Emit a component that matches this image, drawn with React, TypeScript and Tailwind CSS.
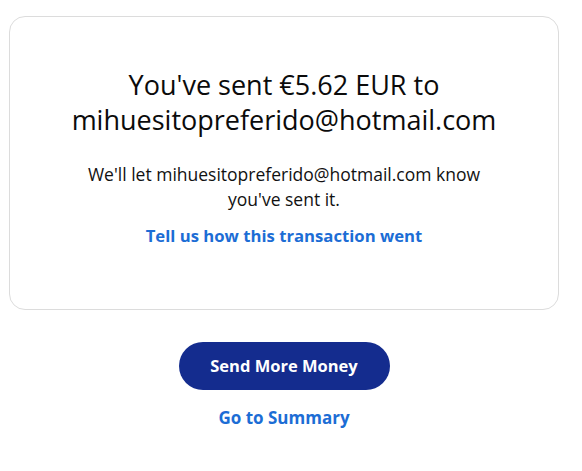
export default function App() {
  return (
    <div className="min-h-screen bg-white px-[9px] pt-4 font-['Open_Sans',sans-serif] text-[#001435]">
      <div className="w-[550px]">
        <div className="flex h-[294px] flex-col items-center rounded-2xl border border-[#dcdcdc] px-6 pt-[50px] text-center">
          <h1 className="text-[27px] leading-[35px] text-[#0b0b0b]">
            You've sent €5.62 EUR to
            <br />
            mihuesitopreferido@hotmail.com
          </h1>
          <p className="mt-[25px] text-[17.5px] leading-[25px] text-[#111]">
            We'll let mihuesitopreferido@hotmail.com know
            <br />
            you've sent it.
          </p>
          <a href="#" className="mt-[12px] text-[16.7px] font-bold leading-[24px] text-[#1c6dd5]">
            Tell us how this transaction went
          </a>
        </div>
        <div className="mt-[32px] flex flex-col items-center">
          <button className="h-[48px] w-[211px] rounded-full bg-[#142c8e] text-[16.5px] font-bold text-white">
            Send More Money
          </button>
          <a href="#" className="mt-[16px] text-[17px] font-bold leading-[24px] text-[#1c6dd5]">
            Go to Summary
          </a>
        </div>
      </div>
    </div>
  );
}
